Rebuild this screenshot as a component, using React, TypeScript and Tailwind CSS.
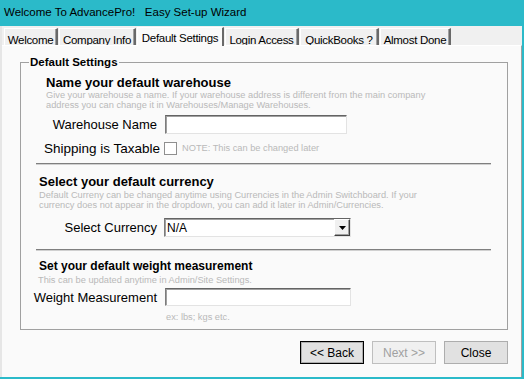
import React from 'react';

const tabs = [
  { label: 'Welcome', w: 'w-[54px]' },
  { label: 'Company Info', w: 'w-[77px]' },
  { label: 'Default Settings', w: 'w-[87px]', active: true },
  { label: 'Login Access', w: 'w-[74px]' },
  { label: 'QuickBooks ?', w: 'w-[79px]' },
  { label: 'Almost Done', w: 'w-[71px]' },
];

function Sunken({ className, children }: { className: string; children?: React.ReactNode }) {
  return (
    <div
      className={`bg-white border border-t-[#646464] border-l-[#7c7c7c] border-r-[#e3e3e3] border-b-[#e3e3e3] shadow-[inset_1px_1px_0_#a0a0a0] ${className}`}
    >
      {children}
    </div>
  );
}

function Hint({ className, children }: { className?: string; children: React.ReactNode }) {
  return <div className={`text-[9.25px] leading-[10px] text-[#b9b9b9] ${className ?? ''}`}>{children}</div>;
}

export default function App() {
  return (
    <div className="w-[524px] h-[379px] flex flex-col bg-[#2bbac9] overflow-hidden font-['Liberation_Sans',Arial,sans-serif] text-black">
      {/* title bar */}
      <div className="h-[26px] shrink-0 flex items-center pl-[4px] text-[11.5px] whitespace-pre">
        Welcome To AdvancePro!   Easy Set-up Wizard
      </div>

      <div className="flex-1 flex flex-col mr-[2px] mb-[2px] bg-[#f0f0f0] border-l-2 border-[#e6e6e6]">
        {/* tabs */}
        <div className="h-[19px] shrink-0 flex items-end gap-[1px] pl-[2px]">
          {tabs.map((t) =>
            t.active ? (
              <div
                key={t.label}
                className={`${t.w} h-[19px] flex justify-center pt-[2px] text-[11.5px] tracking-[-0.3px] bg-[#fafafa] border-t border-l border-white border-r-2 border-r-[#696969] relative top-[1px]`}
              >
                {t.label}
              </div>
            ) : (
              <div
                key={t.label}
                className={`${t.w} h-[17px] flex justify-center pt-[3px] text-[11.5px] tracking-[-0.3px] bg-[#f0f0f0] border-t border-l border-white border-r-2 border-r-[#696969] shadow-[inset_-1px_0_0_#a0a0a0]`}
              >
                {t.label}
              </div>
            )
          )}
        </div>

        {/* panel */}
        <div className="flex-1 flex flex-col bg-[#fafafa] border-t border-white border-r border-r-[#a0a0a0]">
          <fieldset className="ml-[18px] mt-[9px] w-[488px] h-[275px] border border-[#a0a0a0]">
            <legend className="ml-[8px] px-[1px] text-[11.5px] leading-[14px] font-bold">Default Settings</legend>

            {/* warehouse */}
            <div className="ml-[25px] mt-[6px] text-[13px] leading-[15px] font-bold">Name your default warehouse</div>
            <Hint className="ml-[25px]">
              Give your warehouse a name. If your warehouse address is different from the main company
              <br />
              address you can change it in Warehouses/Manage Warehouses.
            </Hint>
            <div className="flex items-center mt-[5px] h-[19px]">
              <div className="w-[136px] text-right text-[13px] leading-[15px]">Warehouse Name</div>
              <Sunken className="ml-[8px] w-[182px] h-[19px]" />
            </div>
            <div className="flex items-center mt-[7px] h-[14px]">
              <div className="w-[139px] text-right text-[13.5px] leading-[15px]">Shipping is Taxable</div>
              <div className="ml-[4px] w-[13px] h-[13px] bg-white border border-[#8f8f8f]" />
              <Hint className="ml-[5px]">NOTE: This can be changed later</Hint>
            </div>

            <div className="ml-[15px] mt-[8px] w-[455px] h-[2px] bg-[#7f7f7f] border-b border-[#d0d0d0]" />

            {/* currency */}
            <div className="ml-[18px] mt-[9px] text-[13px] leading-[15px] font-bold">Select your default currency</div>
            <Hint className="ml-[18px] mt-[1px]">
              Default Curreny can be changed anytime using Currencies in the Admin Switchboard. If your
              <br />
              currency does not appear in the dropdown, you can add it later in Admin/Currencies.
            </Hint>
            <div className="flex items-center mt-[8px] h-[19px]">
              <div className="w-[136px] text-right text-[13px] leading-[15px]">Select Currency</div>
              <Sunken className="ml-[7px] w-[187px] h-[19px] flex items-center">
                <span className="flex-1 pl-[2px] text-[12px] leading-[14px]">N/A</span>
                <div className="w-[16px] h-[17px] bg-[#f0f0f0] border border-t-white border-l-white border-r-[#404040] border-b-[#404040] shadow-[inset_-1px_-1px_0_#a0a0a0] flex items-center justify-center">
                  <svg width="7" height="4" viewBox="0 0 7 4">
                    <path d="M0 0H7L3.5 4Z" fill="#000" />
                  </svg>
                </div>
              </Sunken>
            </div>

            <div className="ml-[15px] mt-[12px] w-[455px] h-[2px] bg-[#7f7f7f] border-b border-[#d0d0d0]" />

            {/* weight */}
            <div className="ml-[18px] mt-[8px] text-[12px] leading-[14px] font-bold">Set your default weight measurement</div>
            <Hint className="ml-[17px] mt-[2px]">This can be updated anytime in Admin/Site Settings.</Hint>
            <div className="flex items-center mt-[3px] h-[18px]">
              <div className="w-[136px] text-right text-[13px] leading-[15px]">Weight Measurement</div>
              <Sunken className="ml-[8px] w-[186px] h-[18px]" />
            </div>
            <Hint className="ml-[145px] mt-[6px]">ex: lbs; kgs etc.</Hint>
          </fieldset>

          {/* buttons */}
          <div className="flex justify-end gap-[8px] mt-[11px] mr-[13px]">
            <button className="w-[64px] h-[23px] text-[12px] bg-[#e1e1e1] border border-black shadow-[inset_0_0_0_1px_#adadad]">
              &lt;&lt; Back
            </button>
            <button className="w-[64px] h-[23px] text-[12px] text-[#a0a0a0] bg-[#f0f0f0] border border-[#bfbfbf]">
              Next &gt;&gt;
            </button>
            <button className="w-[64px] h-[23px] text-[12px] bg-[#e1e1e1] border border-[#adadad]">Close</button>
          </div>
        </div>
      </div>
    </div>
  );
}
